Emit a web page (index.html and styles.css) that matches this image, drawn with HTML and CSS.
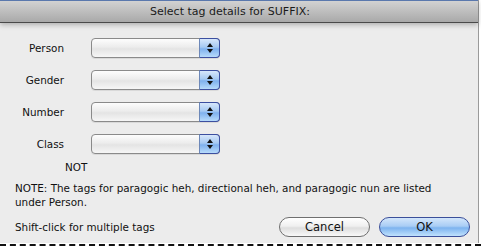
FILE: index.html
```html
<!DOCTYPE html>
<html lang="en">
<head>
    <meta charset="UTF-8">
    <title>Select tag details</title>
    <link rel="stylesheet" href="styles.css">
</head>
<body>
    <div class="dialog">
        <div class="titlebar">Select tag details for SUFFIX:</div>

        <div class="fields">
            <div class="field">
                <label>Person</label>
                <div class="popup"><span class="popup-arrows"></span></div>
            </div>
            <div class="field">
                <label>Gender</label>
                <div class="popup"><span class="popup-arrows"></span></div>
            </div>
            <div class="field">
                <label>Number</label>
                <div class="popup"><span class="popup-arrows"></span></div>
            </div>
            <div class="field">
                <label>Class</label>
                <div class="popup"><span class="popup-arrows"></span></div>
            </div>
        </div>

        <div class="not-label">NOT</div>

        <p class="note">NOTE: The tags for paragogic heh, directional heh, and paragogic nun are listed under Person.</p>

        <div class="footer">
            <span class="hint">Shift-click for multiple tags</span>
            <button class="btn">Cancel</button>
            <button class="btn btn-default">OK</button>
        </div>
    </div>
    <div class="backdrop"></div>
</body>
</html>
```

FILE: styles.css
```css
body {
    margin: 0;
    width: 481px;
    height: 247px;
    overflow: hidden;
    background: #fff;
    font-family: "DejaVu Sans", sans-serif;
    font-size: 10.4px;
    color: #111;
}
.dialog {
    width: 478px;
    height: 243px;
    background: #ececec;
    border-right: 1px solid #9a9a9a;
}
.titlebar {
    height: 21px;
    padding-right: 18px;
    border-top: 1px solid #5a78ad;
    border-bottom: 1px solid #4a4a4a;
    background: linear-gradient(#d2d2d2, #a9a9a9);
    text-align: center;
    line-height: 22px;
    font-size: 11px;
    color: #1a1a1a;
    box-shadow: 0 2px 5px rgba(0, 0, 0, 0.25);
}
.fields {
    padding-top: 15px;
    display: flex;
    flex-direction: column;
    gap: 12px;
}
.field {
    display: flex;
    align-items: center;
    height: 20px;
}
.field label {
    width: 64px;
    text-align: right;
    margin-right: 27px;
}
.popup {
    width: 127px;
    height: 18px;
    border: 1px solid #8a8a8a;
    border-radius: 4px;
    background: linear-gradient(#fdfdfd, #ececec 45%, #e4e4e4 55%, #f6f6f6);
    display: flex;
    justify-content: flex-end;
    box-shadow: 0 1px 0 rgba(0, 0, 0, 0.08);
}
.popup-arrows {
    width: 19px;
    height: 18px;
    margin: -1px -1px 0 0;
    border: 1px solid #3c4fa0;
    border-left-color: #6d88b8;
    border-radius: 0 4px 4px 0;
    background: linear-gradient(#d7e7fb, #a6c9f2 45%, #7fb1ee 55%, #b7dbfb);
    position: relative;
}
.popup-arrows::before,
.popup-arrows::after {
    content: "";
    position: absolute;
    left: 7px;
    border-left: 3px solid transparent;
    border-right: 3px solid transparent;
}
.popup-arrows::before {
    top: 4px;
    border-bottom: 4px solid #111;
}
.popup-arrows::after {
    top: 10px;
    border-top: 4px solid #111;
}
.not-label {
    margin: 6px 0 0 65px;
    line-height: 14px;
}
.note {
    margin: 7px 0 0 15px;
    width: 432px;
    line-height: 14px;
}
.footer {
    display: flex;
    align-items: center;
    height: 22px;
    margin: 7px 0 0 15px;
}
.hint {
    flex: 1;
}
.btn {
    width: 91px;
    height: 20px;
    border: 1px solid #6f6f6f;
    border-radius: 10px;
    background: linear-gradient(#ffffff, #f0f0f0 45%, #dedede 55%, #f8f8f8);
    font-family: "DejaVu Sans", sans-serif;
    font-size: 11.5px;
    color: #111;
    padding: 0;
    margin-left: 9px;
}
.btn-default {
    margin-right: 8px;
    border-color: #3b4f9a;
    background: linear-gradient(#d3e6fb, #a9cdf5 45%, #7db3ef 55%, #c0e2fd);
}
.backdrop {
    height: 2px;
    margin-top: 1px;
    border-top: 2px dashed #111;
}
```
